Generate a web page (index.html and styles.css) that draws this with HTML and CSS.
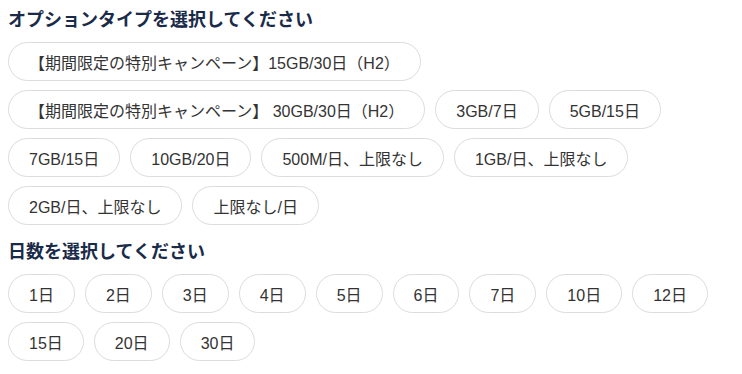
FILE: index.html
```html
<!DOCTYPE html>
<html lang="ja">
<head>
  <meta charset="UTF-8" />
  <meta name="viewport" content="width=device-width, initial-scale=1.0"/>
  <title>オプション選択</title>
  <link rel="stylesheet" href="styles.css">
</head>
<body>
  <section class="option-section">
    <h2>オプションタイプを選択してください</h2>
    <div class="chip-list">
      <button type="button" class="chip">【期間限定の特別キャンペーン】15GB/30日（H2）</button>
      <button type="button" class="chip">【期間限定の特別キャンペーン】 30GB/30日（H2）</button>
      <button type="button" class="chip">3GB/7日</button>
      <button type="button" class="chip">5GB/15日</button>
      <button type="button" class="chip">7GB/15日</button>
      <button type="button" class="chip">10GB/20日</button>
      <button type="button" class="chip">500M/日、上限なし</button>
      <button type="button" class="chip">1GB/日、上限なし</button>
      <button type="button" class="chip">2GB/日、上限なし</button>
      <button type="button" class="chip">上限なし/日</button>
    </div>
  </section>

  <section class="option-section">
    <h2>日数を選択してください</h2>
    <div class="chip-list">
      <button type="button" class="chip">1日</button>
      <button type="button" class="chip">2日</button>
      <button type="button" class="chip">3日</button>
      <button type="button" class="chip">4日</button>
      <button type="button" class="chip">5日</button>
      <button type="button" class="chip">6日</button>
      <button type="button" class="chip">7日</button>
      <button type="button" class="chip">10日</button>
      <button type="button" class="chip">12日</button>
      <button type="button" class="chip">15日</button>
      <button type="button" class="chip">20日</button>
      <button type="button" class="chip">30日</button>
    </div>
  </section>
</body>
</html>
```

FILE: styles.css
```css
* { margin: 0; padding: 0; box-sizing: border-box; }
body {
  font-family: 'Liberation Sans', 'Noto Sans CJK JP', sans-serif;
  background: #fff;
  color: #333;
  padding: 7px 8px;
}
.option-section { margin-bottom: 14px; }
.option-section h2 {
  font-size: 18px;
  line-height: 26px;
  font-weight: bold;
  color: #1a2b49;
  margin-bottom: 9px;
}
.chip-list {
  display: flex;
  flex-wrap: wrap;
  gap: 9px 10px;
}
.chip {
  height: 39px;
  padding: 0 20px;
  border: 1px solid #dcdcdc;
  border-radius: 20px;
  background: #fff;
  color: #333;
  font-family: inherit;
  font-size: 16px;
  cursor: pointer;
}
.chip:hover { border-color: #1a2b49; }
```
